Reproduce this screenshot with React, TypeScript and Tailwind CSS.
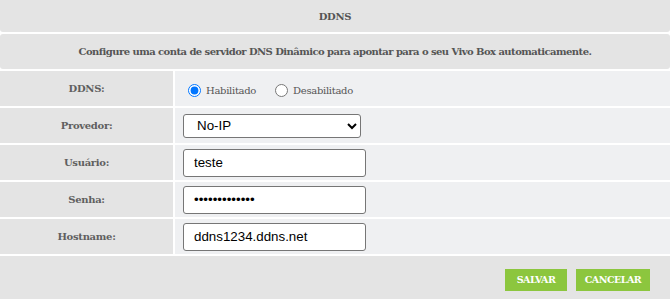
import { useState } from "react"

function Field({ label, children }: { label: string; children: React.ReactNode }) {
  return (
    <>
      <div className="h-[35px] bg-[#e4e4e4] flex items-center justify-center text-[10px] font-bold tracking-[-0.3px] text-[#5f5f5f]">
        {label}
      </div>
      <div className="h-[35px] bg-[#eff0f2] flex items-center pl-2">{children}</div>
    </>
  )
}

const inputCls =
  "w-[183px] h-[28px] bg-white border border-[#767676] rounded-[3px] px-[10px] font-['Liberation_Sans',Arial,sans-serif] text-[13.33px] text-black outline-none"

export default function App() {
  const [enabled, setEnabled] = useState(true)

  return (
    <div className="w-[670px] h-[299px] bg-white flex flex-col gap-[2px] overflow-hidden font-['DejaVu_Serif',serif]">
      <div className="h-[32px] bg-[#e4e4e4] rounded-b-[3px] flex items-center justify-center text-[10px] font-bold tracking-[-0.3px] text-[#555]">
        DDNS
      </div>
      <div className="h-[35px] bg-[#e4e4e4] rounded-[3px] flex items-center justify-center text-[10px] font-bold text-[#555] tracking-[-0.55px]">
        Configure uma conta de servidor DNS Dinâmico para apontar para o seu Vivo Box automaticamente.
      </div>

      <div className="grid grid-cols-[173px_1fr] gap-[2px]">
        <Field label="DDNS:">
          <label className="flex items-center text-[10px] tracking-[-0.3px] text-[#555] pt-[3px]">
            <input
              type="radio"
              name="ddns"
              className="ml-[5px] mr-[5px] w-[13px] h-[13px]"
              checked={enabled}
              onChange={() => setEnabled(true)}
            />
            <span>Habilitado</span>
          </label>
          <label className="flex items-center ml-[19px] text-[10px] tracking-[-0.3px] text-[#555] pt-[3px]">
            <input
              type="radio"
              name="ddns"
              className="mr-[5px] w-[13px] h-[13px]"
              checked={!enabled}
              onChange={() => setEnabled(false)}
            />
            <span>Desabilitado</span>
          </label>
        </Field>
        <Field label="Provedor:">
          <select
            className="w-[178px] h-[24px] bg-white border border-[#767676] rounded-[3px] pl-[9px] font-['Liberation_Sans',Arial,sans-serif] text-[13.33px] text-black"
            defaultValue="No-IP"
          >
            <option>No-IP</option>
            <option>DynDNS</option>
          </select>
        </Field>
        <Field label="Usuário:">
          <input className={inputCls} defaultValue="teste" />
        </Field>
        <Field label="Senha:">
          <input className={inputCls} type="password" defaultValue="1234567890123" />
        </Field>
        <Field label="Hostname:">
          <input className={inputCls} defaultValue="ddns1234.ddns.net" />
        </Field>
      </div>

      <div className="flex-1 bg-[#e4e4e4] flex items-start justify-end gap-[9px] pt-[13px] pr-[20px]">
        <button className="w-[62px] h-[22px] bg-[#8cc63e] text-white text-[9.5px] tracking-[-0.5px] font-bold">
          SALVAR
        </button>
        <button className="w-[74px] h-[22px] bg-[#8cc63e] text-white text-[9.5px] tracking-[-0.5px] font-bold">
          CANCELAR
        </button>
      </div>
    </div>
  )
}
